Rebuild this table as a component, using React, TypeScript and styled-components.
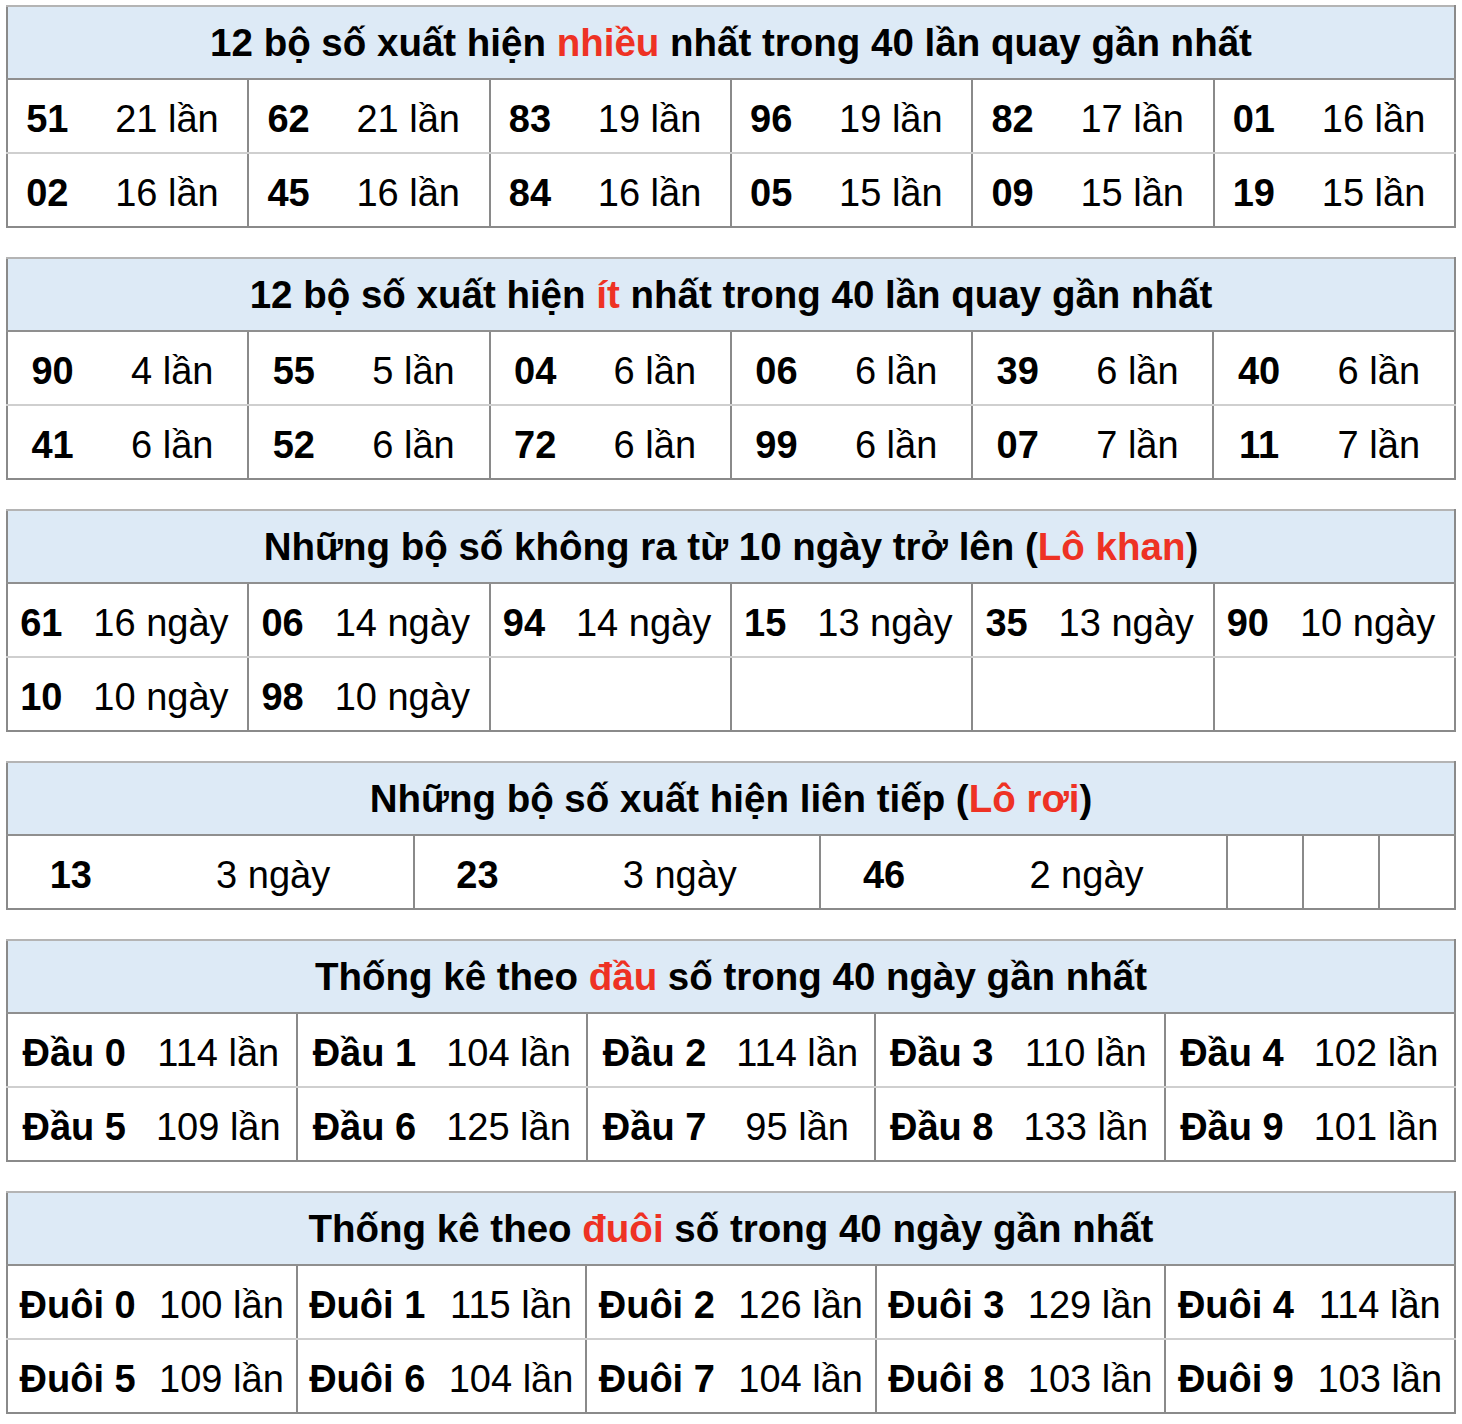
import React from "react";
import styled, { createGlobalStyle } from "styled-components";

const GlobalStyle = createGlobalStyle`
  html, body { margin: 0; padding: 0; background: #ffffff; }
  body { font-family: "Liberation Sans", Arial, Helvetica, sans-serif; color: #000; }
`;

const Page = styled.div`
  display: flex;
  flex-direction: column;
  gap: 29px;
  padding: 5px 6px 8px 6px;
`;

const Table = styled.table`
  width: 100%;
  border-collapse: collapse;
  border: 2px solid #8a8a8a;
  border-top-color: #b4b4b4;
`;

const HeaderCell = styled.th`
  background: #ddeaf6;
  font-size: 38.5px;
  font-weight: 700;
  line-height: 40px;
  padding: 16px 8px 15px;
  text-align: center;
  border-bottom: 2px solid #8f8f8f;
  white-space: nowrap;
`;

const Red = styled.span`
  color: #ee3224;
`;

const Row = styled.tr<{ $last?: boolean }>`
  & > td {
    border-bottom: 2px solid ${(p) => (p.$last ? "#8a8a8a" : "#cfcfcf")};
  }
`;

const NumCell = styled.td`
  font-size: 38px;
  font-weight: 700;
  line-height: 40px;
  padding: 18.5px 8px 13.5px;
  text-align: center;
  white-space: nowrap;
  border-left: 2px solid #8a8a8a;
`;

const CountCell = styled.td`
  font-size: 38px;
  font-weight: 400;
  line-height: 40px;
  padding: 18.5px 8px 13.5px;
  text-align: center;
  white-space: nowrap;
  border-right: 2px solid #8a8a8a;
`;

const EmptyCell = styled.td<{ $w: number }>`
  width: ${(p) => p.$w}px;
  padding: 18.5px 0 13.5px;
  line-height: 40px;
  border-left: 2px solid #8a8a8a;
  border-right: 2px solid #8a8a8a;
`;

type Pair = [string, string] | null;

type Section = {
  title: React.ReactNode;
  rows: Pair[][];
  extraEmpty?: number;
};

const lan = (n: string): string => `${n} lần`;
const ngay = (n: string): string => `${n} ngày`;

const sections: Section[] = [
  {
    title: (
      <>
        12 bộ số xuất hiện <Red>nhiều</Red> nhất trong 40 lần quay gần nhất
      </>
    ),
    rows: [
      [["51", lan("21")], ["62", lan("21")], ["83", lan("19")], ["96", lan("19")], ["82", lan("17")], ["01", lan("16")]],
      [["02", lan("16")], ["45", lan("16")], ["84", lan("16")], ["05", lan("15")], ["09", lan("15")], ["19", lan("15")]],
    ],
  },
  {
    title: (
      <>
        12 bộ số xuất hiện <Red>ít</Red> nhất trong 40 lần quay gần nhất
      </>
    ),
    rows: [
      [["90", lan("4")], ["55", lan("5")], ["04", lan("6")], ["06", lan("6")], ["39", lan("6")], ["40", lan("6")]],
      [["41", lan("6")], ["52", lan("6")], ["72", lan("6")], ["99", lan("6")], ["07", lan("7")], ["11", lan("7")]],
    ],
  },
  {
    title: (
      <>
        Những bộ số không ra từ 10 ngày trở lên (<Red>Lô khan</Red>)
      </>
    ),
    rows: [
      [["61", ngay("16")], ["06", ngay("14")], ["94", ngay("14")], ["15", ngay("13")], ["35", ngay("13")], ["90", ngay("10")]],
      [["10", ngay("10")], ["98", ngay("10")], null, null, null, null],
    ],
  },
  {
    title: (
      <>
        Những bộ số xuất hiện liên tiếp (<Red>Lô rơi</Red>)
      </>
    ),
    rows: [[["13", ngay("3")], ["23", ngay("3")], ["46", ngay("2")]]],
    extraEmpty: 3,
  },
  {
    title: (
      <>
        Thống kê theo <Red>đầu</Red> số trong 40 ngày gần nhất
      </>
    ),
    rows: [
      [["Đầu 0", lan("114")], ["Đầu 1", lan("104")], ["Đầu 2", lan("114")], ["Đầu 3", lan("110")], ["Đầu 4", lan("102")]],
      [["Đầu 5", lan("109")], ["Đầu 6", lan("125")], ["Đầu 7", lan("95")], ["Đầu 8", lan("133")], ["Đầu 9", lan("101")]],
    ],
  },
  {
    title: (
      <>
        Thống kê theo <Red>đuôi</Red> số trong 40 ngày gần nhất
      </>
    ),
    rows: [
      [["Đuôi 0", lan("100")], ["Đuôi 1", lan("115")], ["Đuôi 2", lan("126")], ["Đuôi 3", lan("129")], ["Đuôi 4", lan("114")]],
      [["Đuôi 5", lan("109")], ["Đuôi 6", lan("104")], ["Đuôi 7", lan("104")], ["Đuôi 8", lan("103")], ["Đuôi 9", lan("103")]],
    ],
  },
];

const StatTable: React.FC<{ section: Section }> = ({ section }) => {
  const pairs = section.rows[0].length;
  const extra = section.extraEmpty ?? 0;
  const cols = pairs * 2 + extra;
  return (
    <Table>
      <thead>
        <tr>
          <HeaderCell colSpan={cols}>{section.title}</HeaderCell>
        </tr>
      </thead>
      <tbody>
        {section.rows.map((row, ri) => (
          <Row key={ri} $last={ri === section.rows.length - 1}>
            {row.map((pair, ci) => (
              <React.Fragment key={ci}>
                <NumCell>{pair ? pair[0] : "\u00a0"}</NumCell>
                <CountCell>{pair ? pair[1] : "\u00a0"}</CountCell>
              </React.Fragment>
            ))}
            {Array.from({ length: extra }).map((_, ei) => (
              <EmptyCell key={`e${ei}`} $w={74} />
            ))}
          </Row>
        ))}
      </tbody>
    </Table>
  );
};

export default function App() {
  return (
    <>
      <GlobalStyle />
      <Page>
        {sections.map((s, i) => (
          <StatTable key={i} section={s} />
        ))}
      </Page>
    </>
  );
}
